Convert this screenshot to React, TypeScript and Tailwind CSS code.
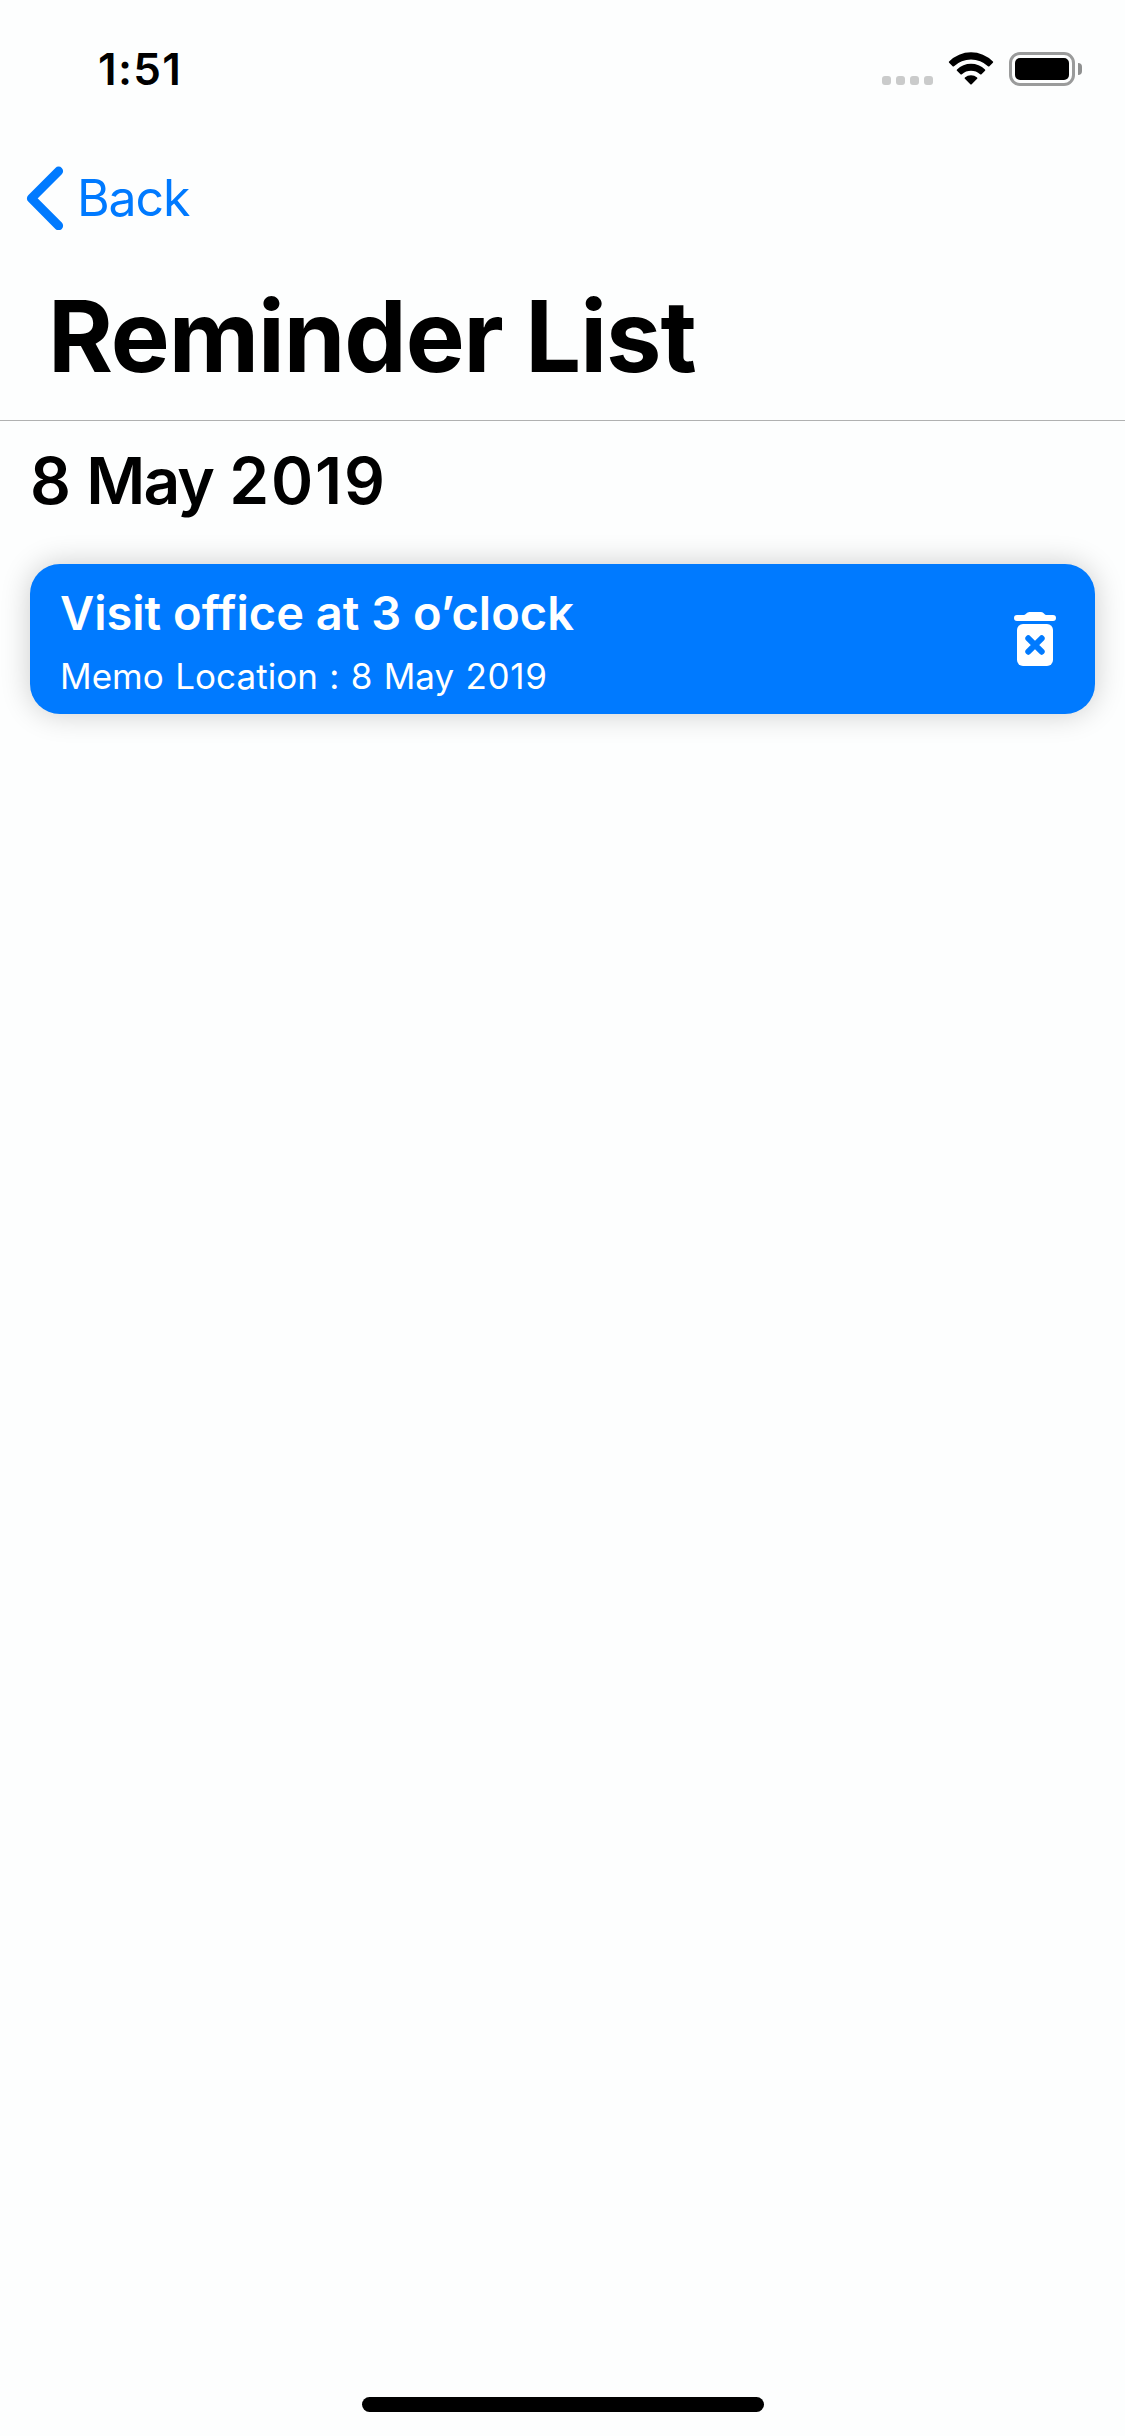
import React from "react";

function SignalDots() {
  return (
    <div className="flex gap-[5px] pt-[23px]">
      {[0, 1, 2, 3].map((i) => (
        <span key={i} className="size-[9px] rounded-[3px] bg-[#cacbcb]" />
      ))}
    </div>
  );
}

function WifiIcon() {
  return (
    <svg width="46" height="34" viewBox="0 0 46 34" className="block" fill="#000">
      <path d="M1.1 9.4 A31 31 0 0 1 44.9 9.4 Q45.5 10.1 44.9 10.7 L41.4 14.2 Q40.7 14.8 40 14.2 A25 25 0 0 0 6 14.2 Q5.3 14.8 4.6 14.2 L1.1 10.7 Q0.5 10.1 1.1 9.4Z" />
      <path d="M9 17.4 A20 20 0 0 1 37 17.4 Q37.7 18.1 37 18.7 L33.5 22.2 Q32.8 22.8 32.1 22.2 A14 14 0 0 0 13.9 22.2 Q13.2 22.8 12.5 22.2 L9 18.7 Q8.3 18.1 9 17.4Z" />
      <path d="M16.9 25.4 A9.4 9.4 0 0 1 29.1 25.4 Q29.8 26 29.1 26.7 L23.7 32.2 Q23 32.8 22.3 32.2 L16.9 26.7 Q16.2 26 16.9 25.4Z" />
    </svg>
  );
}

function BatteryIcon() {
  return (
    <div className="flex items-center gap-[3px]">
      <div className="h-[34px] w-[66px] rounded-[11px] border-[3px] border-[#9a9b9b] p-[3px]">
        <div className="h-full w-full rounded-[5px] bg-black" />
      </div>
      <div className="h-3 w-1 rounded-r-full bg-[#8f9090]" />
    </div>
  );
}

function StatusBar() {
  return (
    <div className="flex h-[132px] items-start justify-between pr-[43px] pl-[98px]">
      <div className="mt-[45px] text-[44px] leading-[48px] font-semibold tracking-[1.3px]">1:51</div>
      <div className="mt-[52px] flex h-[34px] items-center">
        <SignalDots />
        <div className="ml-[15px]">
          <WifiIcon />
        </div>
        <div className="ml-[15px]">
          <BatteryIcon />
        </div>
      </div>
    </div>
  );
}

function NavBar() {
  return (
    <div className="flex h-[132px] items-center pl-[26px] text-[#007aff]">
      <svg width="38" height="64" viewBox="0 0 38 64" className="block" fill="none" stroke="currentColor" strokeWidth="9" strokeLinecap="round">
        <path d="M32.6 5.1 L5.4 32.4 L32.6 59.7" strokeLinejoin="round" />
      </svg>
      <span className="ml-[13px] text-[50px] leading-none tracking-[-1.1px]">Back</span>
    </div>
  );
}

function TrashIcon() {
  return (
    <svg width="42" height="54" viewBox="0 0 42 54" className="block" fill="#fff">
      <path d="M3 3 H9.5 Q11 3 12 1.8 Q13.5 0 15.5 0 H27 Q29 0 30.2 1.8 Q31 3 32.5 3 H39 A3 3 0 0 1 39 9 H3 A3 3 0 0 1 3 3Z" />
      <rect x="3" y="12" width="36" height="42" rx="6" />
      <path d="M14.3 26.3 L27.7 39.7 M27.7 26.3 L14.3 39.7" stroke="#007aff" strokeWidth="6" strokeLinecap="round" />
    </svg>
  );
}

function ReminderCard({ title, day, year }: { title: string; day: string; year: string }) {
  return (
    <div className="mx-[30px] flex h-[150px] items-center justify-between rounded-[30px] bg-[#007aff] pr-[39px] pl-[30px] text-white shadow-[0_0_30px_rgba(0,0,0,0.2)]">
      <div className="flex flex-col pt-[11px]">
        <div className="text-[47px] leading-[64px] font-semibold">{title}</div>
        <div className="text-[35px] leading-[63px] tracking-[0.05px] [word-spacing:1.4px]">
          Memo Location : {day} <span className="tracking-[0.7px]">{year}</span>
        </div>
      </div>
      <TrashIcon />
    </div>
  );
}

export default function App() {
  return (
    <div className="flex h-[2436px] w-[1125px] flex-col overflow-hidden bg-[#fdfefe] font-[Inter,sans-serif] whitespace-nowrap text-black">
      <StatusBar />
      <NavBar />
      <div className="h-[157px] border-b border-[#b0b1b1] pl-[48px]">
        <h1 className="text-[99px] leading-[144px] font-bold tracking-[-1.05px]">Reminder List</h1>
      </div>
      <h2 className="mb-[23px] pl-[30px] text-[64px] leading-[120px] font-semibold tracking-[-1.8px] [word-spacing:2.7px]">
        8 May <span className="-ml-px tracking-[1.9px]">2019</span>
      </h2>
      <ReminderCard title="Visit office at 3 o’clock" day="8 May" year="2019" />
      <div className="mx-auto mt-auto mb-6 h-[15px] w-[402px] rounded-full bg-black" />
    </div>
  );
}
